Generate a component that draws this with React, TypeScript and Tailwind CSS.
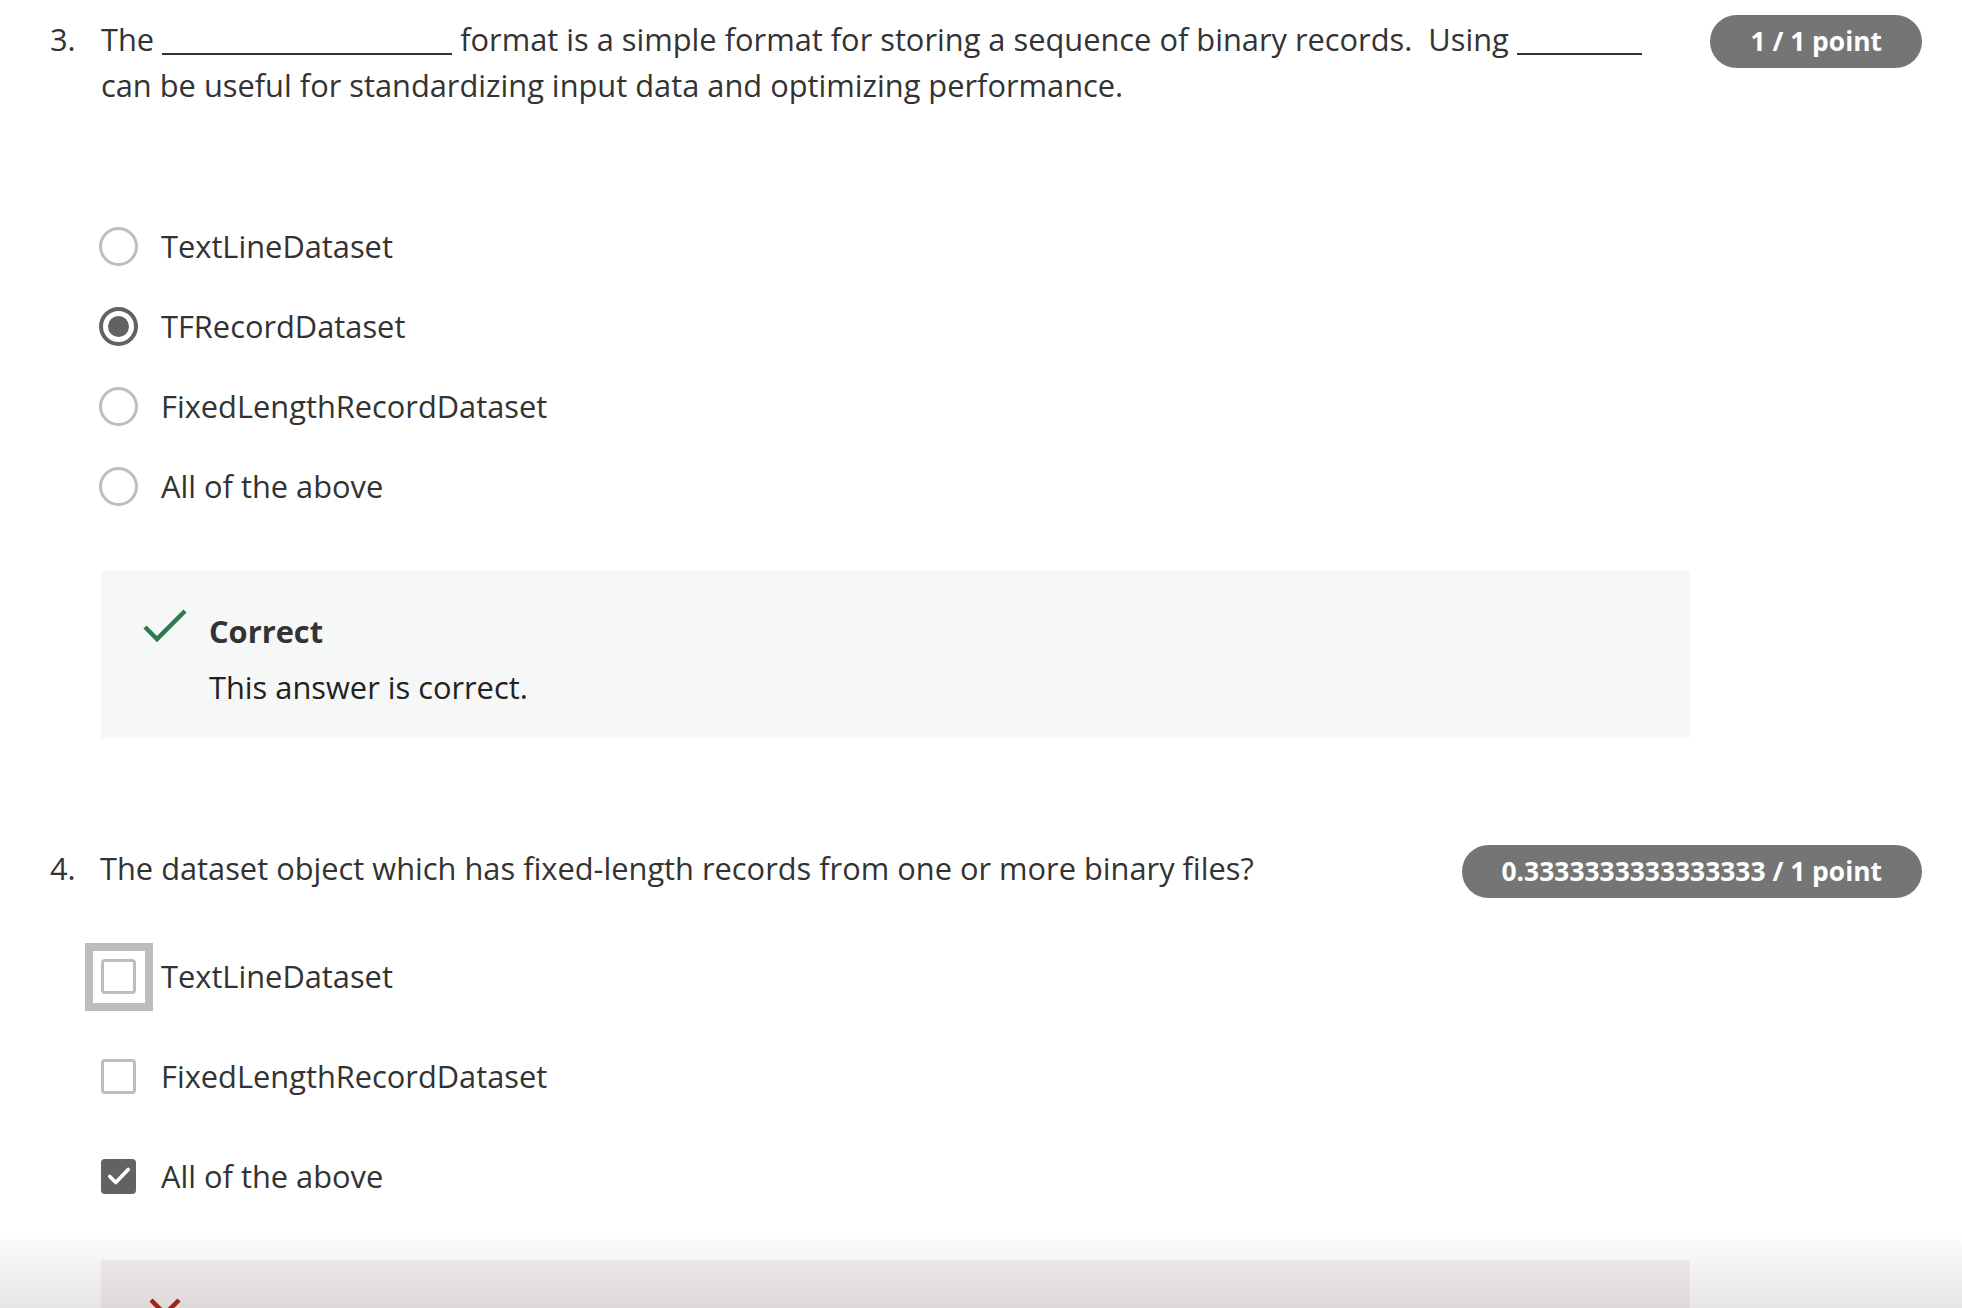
import React from 'react';

type Opt = { label: string; checked?: boolean; focused?: boolean };

const q3Options: Opt[] = [
  { label: 'TextLineDataset' },
  { label: 'TFRecordDataset', checked: true },
  { label: 'FixedLengthRecordDataset' },
  { label: 'All of the above' },
];

const q4Options: Opt[] = [
  { label: 'TextLineDataset', focused: true },
  { label: 'FixedLengthRecordDataset' },
  { label: 'All of the above', checked: true },
];

const Badge: React.FC<{ text: string }> = ({ text }) => (
  <span className="ml-auto shrink-0 h-[53px] px-[40px] rounded-full bg-[#757575] text-white text-[26.4px] font-bold leading-[53px] whitespace-nowrap">
    {text}
  </span>
);

const Blank: React.FC<{ w: string }> = ({ w }) => (
  <span className={`inline-block ${w} border-b-2 border-[#333] translate-y-[4px]`} />
);

const Radio: React.FC<{ checked?: boolean }> = ({ checked }) =>
  checked ? (
    <span className="w-[39px] h-[39px] rounded-full border-[4px] border-[#626262] flex items-center justify-center">
      <span className="w-[21px] h-[21px] rounded-full bg-[#626262]" />
    </span>
  ) : (
    <span className="w-[39px] h-[39px] rounded-full border-[3px] border-[#bdbdbd]" />
  );

const Checkbox: React.FC<{ checked?: boolean; focused?: boolean }> = ({ checked, focused }) => {
  const box = checked ? (
    <span className="w-[35px] h-[35px] rounded-[4px] bg-[#626262] flex items-center justify-center">
      <svg width="26" height="26" viewBox="0 0 24 24" fill="none">
        <path d="M3.5 12.5l5.5 5.5 11.5-12" stroke="white" strokeWidth="3.4" strokeLinecap="round" strokeLinejoin="round" />
      </svg>
    </span>
  ) : (
    <span className="w-[35px] h-[35px] rounded-[4px] border-[3px] border-[#bdbdbd] bg-white" />
  );
  return (
    <span className="relative w-[39px] flex items-center justify-center">
      {focused && (
        <span className="absolute left-[-14px] top-[-16px] w-[68px] h-[68px] border-[8px] border-[#bdbdbd]" />
      )}
      {box}
    </span>
  );
};

export default function App() {
  return (
    <div className="relative h-[1308px] overflow-hidden bg-white text-[#333] font-['Open_Sans',sans-serif]">
      {/* Question 3 */}
      <section className="pt-[15px] pl-[50px] pr-[40px]">
        <div className="flex items-start">
          <span className="w-[51px] shrink-0 text-[30.8px] leading-[46px] mt-px">3.</span>
          <p className="w-[1589px] text-[30.8px] leading-[46px] mt-px">
            The <Blank w="w-[290px]" /> format is a simple format for storing a sequence of binary records.&nbsp; Using <Blank w="w-[125px]" />
            <br />
            can be useful for standardizing input data and optimizing performance.
          </p>
          <Badge text="1 / 1 point" />
        </div>

        <div className="ml-[51px] mt-[98px] flex flex-col">
          {q3Options.map((o) => (
            <label key={o.label} className="h-[80px] flex items-center -ml-[2px]">
              <Radio checked={o.checked} />
              <span className="ml-[23px] text-[30.8px] leading-[40px]">{o.label}</span>
            </label>
          ))}
        </div>

        <div className="ml-[51px] mt-[45px] w-[1589px] h-[167px] bg-[#f6f8f7] pl-[42px] pt-[40px] flex">
          <svg width="44" height="34" viewBox="0 0 44 34" fill="none" className="mt-[-2px]">
            <path d="M2 18l12 12L42 2" stroke="#2e7a4f" strokeWidth="4.5" />
          </svg>
          <div className="ml-[22px]">
            <div className="text-[30.8px] font-bold leading-[40px] text-[#333]">Correct</div>
            <div className="mt-[16px] text-[30.8px] leading-[40px] text-[#222]">This answer is correct.</div>
          </div>
        </div>
      </section>

      {/* Question 4 */}
      <section className="mt-[107px] pl-[50px] pr-[40px]">
        <div className="flex items-start">
          <span className="w-[50px] shrink-0 text-[30.8px] leading-[46px]">4.</span>
          <p className="text-[30.8px] leading-[46px]">
            The dataset object which has fixed-length records from one or more binary files?
          </p>
          <Badge text="0.3333333333333333 / 1 point" />
        </div>

        <div className="ml-[51px] mt-[28px] flex flex-col">
          {q4Options.map((o) => (
            <label key={o.label} className="h-[100px] flex items-center -ml-[2px]">
              <Checkbox checked={o.checked} focused={o.focused} />
              <span className="ml-[23px] text-[30.8px] leading-[40px]">{o.label}</span>
            </label>
          ))}
        </div>

        <div className="ml-[51px] mt-[34px] w-[1589px] h-[167px] bg-[#f7f0f0] pl-[47px] pt-[37px]">
          <svg width="34" height="34" viewBox="0 0 34 34" fill="none">
            <path d="M3 3l28 28M31 3L3 31" stroke="#b3261e" strokeWidth="4.5" />
          </svg>
        </div>
      </section>

      {/* bottom fade */}
      <div className="pointer-events-none absolute left-0 right-0 bottom-0 h-[80px] bg-gradient-to-b from-transparent to-black/10" />
    </div>
  );
}
